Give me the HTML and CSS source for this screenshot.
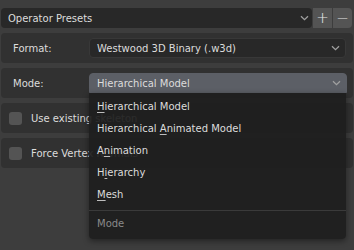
FILE: index.html
```html
<!DOCTYPE html>
<html lang="en">
<head>
    <meta charset="UTF-8">
    <title>Export W3D</title>
    <link rel="stylesheet" href="styles.css">
</head>
<body>
    <div class="toolbar">
        <div class="select preset">
            <span class="select-text">Operator Presets</span>
            <svg class="chevron" width="9" height="6" viewBox="0 0 9 6"><path d="M1 1.2 L4.5 4.6 L8 1.2" /></svg>
        </div>
        <div class="btn-group">
            <button class="tool-btn">+</button>
            <button class="tool-btn last">&minus;</button>
        </div>
    </div>

    <div class="panel">
        <div class="label">Format:</div>
        <div class="select field">
            <span class="select-text">Westwood 3D Binary (.w3d)</span>
            <svg class="chevron" width="9" height="6" viewBox="0 0 9 6"><path d="M1 1.2 L4.5 4.6 L8 1.2" /></svg>
        </div>
    </div>

    <div class="panel">
        <div class="label">Mode:</div>
        <div class="select field open">
            <span class="select-text">Hierarchical Model</span>
            <svg class="chevron" width="9" height="6" viewBox="0 0 9 6"><path d="M1 1.2 L4.5 4.6 L8 1.2" /></svg>

            <!-- open dropdown menu, lies over the rows below -->
            <div class="menu">
                <div class="menu-item"><u>H</u>ierarchical Model</div>
                <div class="menu-item">Hierarchical <u>A</u>nimated Model</div>
                <div class="menu-item">A<u>n</u>imation</div>
                <div class="menu-item">H<u>i</u>erarchy</div>
                <div class="menu-item"><u>M</u>esh</div>
                <div class="menu-sep"></div>
                <div class="menu-title">Mode</div>
            </div>
        </div>
    </div>

    <div class="panel check-row">
        <span class="checkbox"></span>
        <span class="check-label">Use existing skeleton</span>
    </div>

    <div class="panel check-row">
        <span class="checkbox"></span>
        <span class="check-label">Force Vertex Normals</span>
    </div>
</body>
</html>
```

FILE: styles.css
```css
body {
    margin: 0;
    width: 354px;
    height: 250px;
    overflow: hidden;
    background-color: #3d3d3d;
    font-family: "DejaVu Sans", sans-serif;
    font-size: 10px;
    color: #dcdcdc;
}

.toolbar {
    display: flex;
    height: 20px;
    margin: 8px 2px 0 1px;
    gap: 1px;
}

.select {
    display: flex;
    align-items: center;
    background-color: #282828;
    border-radius: 4px;
    box-sizing: border-box;
    height: 20px;
    padding: 0 5px 0 7px;
}

.select-text {
    flex: 1;
    white-space: nowrap;
}

.chevron {
    fill: none;
    stroke: #a0a0a0;
    stroke-width: 1.3;
}

.preset {
    flex: 1;
    padding-right: 3px;
}

.btn-group {
    display: flex;
    gap: 1px;
}

.tool-btn {
    width: 19px;
    height: 20px;
    padding: 0;
    border: none;
    background-color: #545454;
    color: #e6e6e6;
    font-family: "DejaVu Sans", sans-serif;
    font-size: 15px;
    font-weight: 300;
    line-height: 20px;
}

.tool-btn.last {
    border-radius: 0 4px 4px 0;
}

.panel {
    display: flex;
    align-items: center;
    height: 30px;
    margin: 5px 1px 0 1px;
    padding: 0 7px 0 12px;
    background-color: #313131;
    border-radius: 4px;
    box-sizing: border-box;
}

.label {
    width: 76px;
}

.field {
    flex: 1;
    position: relative;
    border: 1px solid #383838;
    height: 20px;
}

.field.open {
    background-color: #5c5f66;
    border-color: #5c5f66;
    border-radius: 4px 4px 0 0;
    margin-right: -1px;
}

.menu {
    position: absolute;
    top: 19px;
    left: -1px;
    right: 0;
    padding: 3px 0 4px 0;
    background-color: rgba(30, 30, 30, 0.93);
    border-radius: 0 0 4px 4px;
    box-shadow: 0 2px 6px rgba(0, 0, 0, 0.45);
    z-index: 10;
}

.menu-item {
    height: 22px;
    line-height: 22px;
    padding-left: 8px;
}

.menu-item u {
    text-decoration-color: #bdbdbd;
    text-underline-offset: 2px;
}

.menu-sep {
    height: 1px;
    margin: 4px 0 2px 0;
    background-color: #3a3a3a;
}

.menu-title {
    height: 22px;
    line-height: 22px;
    padding-left: 8px;
    color: #8a8a8a;
}

.check-row {
    padding-left: 8px;
}

.checkbox {
    width: 13px;
    height: 13px;
    border-radius: 3px;
    background-color: #545454;
    margin-right: 9px;
}

.check-label {
    white-space: nowrap;
}
```
